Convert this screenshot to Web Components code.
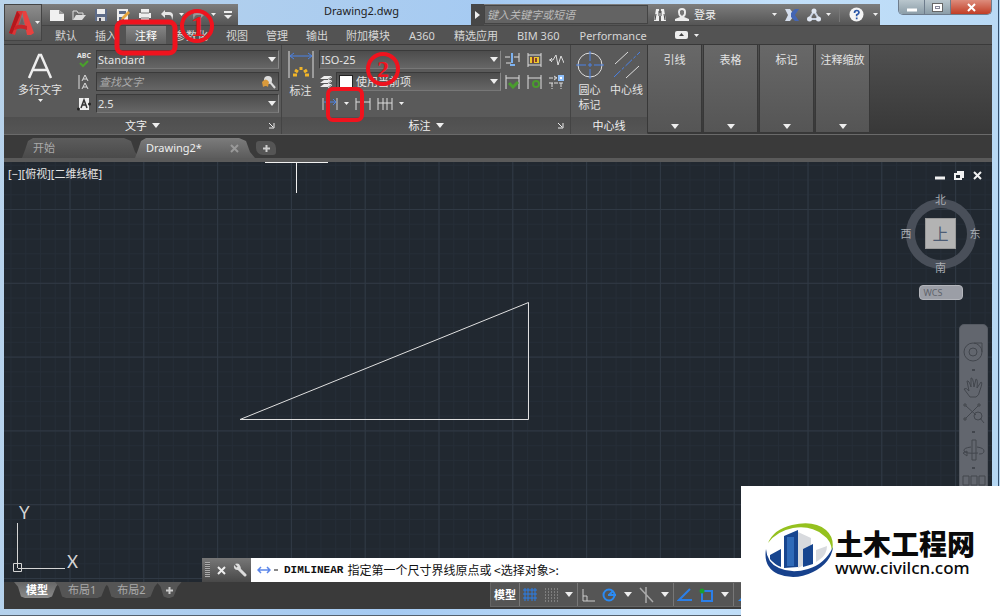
<!DOCTYPE html>
<html lang="zh-CN">
<head>
<meta charset="utf-8">
<meta name="viewport" content="width=device-width, initial-scale=1">
<title>Drawing2.dwg</title>
<style>
  body {
    margin: 0;
    font-family: "Noto Sans", "Noto Sans CJK SC", sans-serif;
    font-size: 11px;
    line-height: 16px;
    color: #e4e4e4;
  }
</style>
</head>
<body>
<cad-app></cad-app>

<script>
// shared by every element that holds controls
const RESET = `
  * { box-sizing: border-box; }
  button, input, select { font: inherit; color: inherit; background: none; border: 0; padding: 0; margin: 0; }
  a { color: inherit; text-decoration: none; }
`;

class CadElement extends HTMLElement {
  constructor() {
    super();
    this.attachShadow({ mode: 'open' });
    this.shadowRoot.innerHTML = `<style>${RESET}</style>` + this.render();
  }
}

// [width, height, markup]
const ICONS = {
  logo: [26, 27, '<path d="M14 2h4l8 22-3 2h-4z" fill="#e8413f"/><path d="M9 2h6l-8 24-6-2z" fill="#dc3436"/><path d="m9 2-8 22 3 1 8-19z" fill="#b5171d"/><path d="M7 17q6-3 12 0v4q-6-3-13 0z" fill="#c92428"/><path d="m12 15 2-7 2 7z" fill="#6d6163"/>'],
  fresh: [14, 14, '<path d="M0 2h9l5 4v7H0z" fill="#f0f0f0"/><path d="M9 2v4h5z" fill="#999"/>'],
  open: [14, 14, '<path d="M1 12V3h4l1 2h5v2" fill="none" stroke="#ddd"/><path d="M1 12 4 7h10l-4 5z" fill="#ddd"/>'],
  save: [14, 14, '<path d="M1 1h12v12H1z" fill="#5d6b87"/><path d="M3 1h8v5H3z" fill="#eee"/><path d="M3 9h8v4H3z" fill="#ddd"/><path d="M5 10h2v3H5z" fill="#445"/>'],
  saveas: [14, 14, '<path d="M1 1h11v12H1z" fill="#eee"/><path d="M3 3h7v3H3zM3 9h5v4H3z" fill="#5d6b87"/><path d="m6 9 6-6 2 2-6 6-3 1z" fill="#e8a53c"/>'],
  print: [14, 14, '<path d="M3 1h8v4H3zM1 5h12v5H1zM3 9h8v4H3z" fill="#eee"/><path d="M3 5h8M3 10h8" stroke="#777"/>'],
  undo: [14, 14, '<path d="M5 2 1 6l4 4V7h4q3 0 3 5 3-8-3-8H5z" fill="#e6e6e6"/>'],
  redo: [14, 14, '<path d="m9 2 4 4-4 4V7H5q-3 0-3 5-3-8 3-8h4z" fill="#999"/>'],
  more: [8, 8, '<path d="M0 0h8v2H0zM0 4h8L4 8z" fill="#eee"/>'],
  down: [8, 5, '<path d="M0 0h8L4 5z" fill="#eee"/>'],
  tiny: [5, 3, '<path d="M0 0h5L2.5 3z" fill="#eee"/>'],
  play: [6, 8, '<path d="M0 0v8l5-4z" fill="#eee"/>'],
  binoculars: [14, 14, '<path d="M3 1h3v4h2V1h3l2 12H8V8H6v5H1z" fill="#f0f0f0"/><path d="M3 6 2 12M11 6l1 6M6 3v5M8 3v5" stroke="#444"/>'],
  user: [14, 14, '<path d="M3 4q0-4 4-4t4 4-2 5l5 2v2H0v-2l5-2Q3 7 3 4z" fill="#ececec"/><path d="M5 3q2-2 4 0v3L7 8 5 6z" fill="#777"/>'],
  exchange: [14, 14, '<path d="M0 1h5l3 4v4l-3 4H0l3-6z" fill="#d5deed"/><path d="M14 1h-4L6 5v4l4 4h4l-4-6z" fill="#4466b4"/>'],
  a360: [14, 14, '<path d="M7 3 2 11h10z" fill="none" stroke="#c9d3e3" stroke-width="2"/><circle cx="7" cy="3" r="2.5" fill="#dfe6f1"/><circle cx="2.5" cy="11" r="2.5" fill="#dfe6f1"/><circle cx="11.5" cy="11" r="2.5" fill="#dfe6f1"/>'],
  help: [15, 15, '<circle cx="7.5" cy="7.5" r="7" fill="#f4f4f4"/><path d="M5.5 6q0-2.5 2.2-2.5T10 5.6q0 1.300-2.300 2.200v1.400M7.700 10.500v1.800" fill="none" stroke="#2a57a8" stroke-width="1.700"/>'],
  textBig: [26, 26, '<path d="m2 25 10-23h2l10 23m-18-8h14" fill="none" stroke="#eee" stroke-width="2.500"/>'],
  spell: [12, 8, '<path d="m2 3 3 3 5-5" fill="none" stroke="#4aa02c" stroke-width="2"/>'],
  findText: [14, 16, '<path d="M2 1v14M5 7l3-6 3 6M6 5h4M5 15l3-6 3 6M6 13h4" fill="none" stroke="#ddd"/>'],
  height: [14, 14, '<path d="M2 1h10v12H2z" fill="#eee"/><path d="m4 11 3-8 3 8M5 8h4" fill="none" stroke="#333" stroke-width="1.500"/><circle cx="1.500" cy="12" r="1.500" fill="#222"/><circle cx="12.500" cy="7" r="1.500" fill="#222"/>'],
  search: [14, 14, '<circle cx="6" cy="5" r="4" fill="#ddd"/><path d="m8 7 5 6" stroke="#ddd" stroke-width="2"/><path d="M0 7q4-5 7 0l-1 5q-2-2-5 0z" fill="#d99a3c"/>'],
  dimBig: [26, 28, '<path d="M1 0v27M25 0v27" stroke="#ddd"/><path d="M3 5h20M6 2 2 5l4 3M20 2l4 3-4 3" fill="none" stroke="#4a82e6"/><path d="M5 24h4M7 19l3 2M13 16v3M19 19l-3 2M21 24h-4" stroke="#f0b429" stroke-width="3"/>'],
  layers: [14, 14, '<path d="M5 1h8L9 4H1zM5 5h8L9 8H1zM5 9h8l-4 3H1z" fill="#eee"/><path d="M9 5l4-3M9 9l4-3M9 13l4-3" stroke="#ddd"/>'],
  linear: [16, 14, '<path d="M1 1v12M15 1v12" stroke="#ccc"/><path d="M2 5h12M11 2l3 3-3 3" fill="none" stroke="#4a82e6"/>'],
  quick: [16, 14, '<path d="M1 1v12M15 1v12M1 5h14" stroke="#ddd" fill="none"/>'],
  chain: [16, 14, '<path d="M1 1v12M6 1v12M10 1v12M15 1v12M1 6h14" stroke="#ddd"/>'],
  dimBreak: [15, 14, '<path d="M7 0v10M5 12h5" stroke="#7db2f0" stroke-width="2"/><path d="M0 4h5M9 4h5M14 0v9M1 10h5" stroke="#ddd"/>'],
  dimSpace: [15, 14, '<path d="M1 0v14M14 0v14M1 2h13M1 12h13" stroke="#ddd"/><path d="M3 4h9v6H3z" fill="#eec62d"/><path d="M6 4v6M9 5v4" stroke="#83402f" stroke-width="2"/>'],
  jog: [15, 14, '<path d="M0 7h4l3-5 2 10 3-9 3 7M3 5 1 7l2 2" fill="none" stroke="#ddd"/>'],
  inspect: [15, 14, '<path d="M1 0v14M14 0v14M1 3h13" stroke="#ddd"/><path d="m4 8 4 4 5-5" fill="none" stroke="#4a9b2e" stroke-width="3"/>'],
  update: [15, 14, '<path d="M1 0v14M14 0v14M1 3h13" stroke="#ddd"/><circle cx="9" cy="9" r="3" fill="none" stroke="#4a9b2e" stroke-width="2"/>'],
  reassoc: [15, 14, '<path d="M0 3h8M5 1l3 2-3 2M0 8h14M3 8v6M12 8v6" fill="none" stroke="#ddd" stroke-dasharray="4 1"/><path d="M9 0h6v6H9z" fill="#8fc0fb"/><path d="M11 2h2v2h-2z" fill="#fff"/>'],
  centerMark: [28, 28, '<circle cx="14" cy="14" r="12" fill="none" stroke="#ddd"/><path d="M0 14h10m2 0h4m2 0h10M14 0v10m0 2v4m0 2v10" stroke="#4a82e6"/>'],
  centerLine: [28, 28, '<path d="M2 13 15 1M13 27l13-12" stroke="#ddd"/><path d="m1 26 26-25" stroke="#4a82e6" stroke-dasharray="9 2 3 2"/>'],
  launcher: [6, 6, '<path d="m0 0 4 4M5 0v5H0" fill="none" stroke="#eee"/>'],
  toggle: [13, 9, '<rect width="13" height="8" rx="2" fill="#eee"/><path d="M4 5h5L6.500 2z" fill="#444"/>'],
  plus: [9, 9, '<path d="M4.500 1v7M1 4.500h7" stroke="#ccc" stroke-width="2"/>'],
  close: [9, 9, '<path d="m1 1 7 7m0-7L1 8" stroke="currentColor" stroke-width="2"/>'],
  minimise: [10, 9, '<path d="M0 7h10" stroke="currentColor" stroke-width="3"/>'],
  restore: [10, 9, '<path d="M1 3h6v5H1zM3 1h6v6" fill="none" stroke="currentColor" stroke-width="2"/>'],
  window: [11, 9, '<path d="M0 0h11v9H0z" fill="#666"/><path d="M1 1h9v7H1z" fill="#fff"/><path d="M3 3h5v3H3z" fill="#889"/><path d="M4 4h3v1H4z" fill="#fff"/>'],
  wrench: [14, 14, '<path d="m5 5 7 7" stroke="#ddd" stroke-width="3" stroke-linecap="round"/><path d="M2 1 5 4 4 5 1 2Q0 7 5 7T6 1Q4 0 2 1z" fill="#ddd"/>'],
  command: [14, 9, '<path d="M2 4h10M4 1 1 4l3 3M10 1l3 3-3 3" fill="none" stroke="#5b86ea" stroke-width="1.500"/>'],
  gridBlue: [14, 14, '<path d="M2 0v13M5 0v13M9 0v13M12 0v13M0 2h14M0 6h14M0 10h14" stroke="#2b7fe8"/>'],
  gridDots: [14, 14, '<path d="M1 1h13M1 4h13M1 7h13M1 10h13M1 13h13" stroke="#aaa" stroke-dasharray="1 2"/>'],
  ortho: [14, 14, '<path d="M2 1v12h12M2 8h4v5" fill="none" stroke="#ccc"/>'],
  polar: [15, 14, '<circle cx="7" cy="7" r="5.500" fill="none" stroke="#2b8af2" stroke-width="2"/><path d="M6 7h8M7 7l4-4" stroke="#2b8af2" stroke-width="2"/>'],
  iso: [15, 16, '<path d="M7 0v16M1 1l13 14" stroke="#aaa" stroke-width="1.500"/>'],
  track: [15, 14, '<path d="M13 1 2 12h13" fill="none" stroke="#2b7fe8" stroke-width="2"/>'],
  snap: [15, 14, '<path d="M3 3h10v10H3z" fill="none" stroke="#2b7fe8" stroke-width="2"/><circle cx="3" cy="3" r="2.500" fill="#1c9e2d"/>'],
  annot: [14, 14, '<path d="M13 1 1 13h12z" fill="#2b8af2"/>'],
  wheel: [24, 24, '<circle cx="11" cy="12" r="9"/><path d="M12 3h8v9"/><circle cx="11" cy="12" r="4"/>'],
  hand: [24, 24, '<path d="M8 21 2 13q2-2 5 2L5 5q2-1 4 6V2q2-1 3 9l2-8q2 0 1 9l4-6q2 0-1 8-1 6-4 7z"/>'],
  zoom: [24, 24, '<path d="m4 4 10 9M16 4 4 16m14 0 4 5"/><circle cx="16" cy="14" r="4"/><path d="M2 2h2v2H2zM16 2h2v2h-2zM2 16h2v2H2z"/>'],
  orbit: [24, 24, '<path d="M10 2h4v20h-4zM9 9Q1 10 2 13t14 2M15 9q7 1 7 4t-5 3"/><path d="m1 15 4 3v-5z"/>'],
  motion: [24, 12, '<path d="M1 2h6v9H1zM9 2h6v9H9zM17 2h6v9h-6z"/>']
};

class CadIcon extends HTMLElement {
  constructor() {
    super();
    this.attachShadow({ mode: 'open' });
  }

  connectedCallback() {
    const [w, h, body] = ICONS[this.getAttribute('name')];
    this.shadowRoot.innerHTML = `
      <style>
        :host { display: inline-flex; flex: none; }
        svg { display: block; }
      </style>
      <svg width="${w}" height="${h}" viewBox="0 0 ${w} ${h}" aria-hidden="true">${body}</svg>
    `;
  }
}
customElements.define('cad-icon', CadIcon);

class CadTitleBar extends CadElement {
  render() {
    return `
      <style>
        :host { display: flex; height: 25px; color: #eee; }
        .quick, .info { display: flex; align-items: center; margin-top: 4px; background: linear-gradient(#7d7d7d, #555); }
        .quick { gap: 8px; width: 196px; padding-left: 8px; }
        .quick button, .info button { display: flex; align-items: center; }
        .small { gap: 5px; }
        h1 { flex: 1; margin: 0; padding: 3px 0 0 14px; font-size: 11px; font-weight: 400; text-align: center; color: #222; }
        .info { width: 409px; gap: 8px; padding-right: 2px; }
        .expand { width: 13px; height: 21px; justify-content: center; background: #474747; }
        .find { display: flex; align-items: center; gap: 5px; margin-left: -8px; }
        input { width: 164px; height: 19px; padding: 0 2px; background: #636363; border: 1px solid #444; font-style: italic; }
        input::placeholder { color: #bbb; opacity: 1; }
        .login { gap: 5px; }
        .grow { flex: 1; justify-content: flex-end; }
        .help { gap: 9px; border-left: 1px solid #777; padding-left: 9px; }
        .win { display: flex; height: 15px; margin-left: 18px; border: 1px solid #6e7c8c; border-top: 0; border-radius: 0 0 5px 5px; overflow: hidden; color: #fff; }
        .win button { display: flex; align-items: center; justify-content: center; width: 26px; background: linear-gradient(#b9c6cd, #8b9da8); border-right: 1px solid #6e7c8c; }
        .win .close { width: 40px; border: 0; background: linear-gradient(#dd8c7c, #c13d25); }
      </style>
      <div class="quick">
        <button aria-label="新建"><cad-icon name="fresh"></cad-icon></button>
        <button aria-label="打开"><cad-icon name="open"></cad-icon></button>
        <button aria-label="保存"><cad-icon name="save"></cad-icon></button>
        <button aria-label="另存为"><cad-icon name="saveas"></cad-icon></button>
        <button aria-label="打印"><cad-icon name="print"></cad-icon></button>
        <button aria-label="放弃" class="small"><cad-icon name="undo"></cad-icon><cad-icon name="tiny"></cad-icon></button>
        <button aria-label="重做" class="small"><cad-icon name="redo"></cad-icon><cad-icon name="tiny"></cad-icon></button>
        <button aria-label="自定义"><cad-icon name="more"></cad-icon></button>
      </div>
      <h1>Drawing2.dwg</h1>
      <div class="info">
        <button class="expand" aria-label="展开搜索"><cad-icon name="play"></cad-icon></button>
        <div class="find">
          <input type="search" aria-label="搜索" placeholder="键入关键字或短语">
          <button aria-label="查找"><cad-icon name="binoculars"></cad-icon></button>
        </div>
        <button class="login"><cad-icon name="user"></cad-icon>登录</button>
        <button class="grow" aria-label="帐户"><cad-icon name="tiny"></cad-icon></button>
        <button aria-label="Exchange"><cad-icon name="exchange"></cad-icon></button>
        <button aria-label="A360" class="small"><cad-icon name="a360"></cad-icon><cad-icon name="tiny"></cad-icon></button>
        <button aria-label="帮助" class="help"><cad-icon name="help"></cad-icon><cad-icon name="tiny"></cad-icon></button>
      </div>
      <div class="win">
        <button aria-label="最小化"><cad-icon name="minimise"></cad-icon></button>
        <button aria-label="还原"><cad-icon name="window"></cad-icon></button>
        <button aria-label="关闭" class="close"><cad-icon name="close"></cad-icon></button>
      </div>
    `;
  }
}
customElements.define('cad-title-bar', CadTitleBar);

class CadMenu extends CadElement {
  render() {
    return `
      <style>
        :host { display: flex; height: 20px; padding-left: 42px; background: #535353; border-top: 1px solid #444; border-bottom: 1px solid #3a3a3a; color: #d6d6d6; }
        nav { display: flex; }
        a { padding: 2px 9px 0; white-space: nowrap; }
        a:lang(en) { padding: 2px 10px 0; }
        a[aria-current] { color: #fff; background: linear-gradient(#858585, #606060); }
        button { display: flex; align-items: center; gap: 6px; margin-left: 18px; }
      </style>
      <nav>
        <a href="#">默认</a><a href="#">插入</a><a href="#" aria-current="page">注释</a><a href="#">参数化</a>
        <a href="#">视图</a><a href="#">管理</a><a href="#">输出</a><a href="#">附加模块</a><a href="#" lang="en">A360</a>
        <a href="#">精选应用</a><a href="#" lang="en">BIM 360</a><a href="#" lang="en">Performance</a>
      </nav>
      <button aria-label="最小化功能区"><cad-icon name="toggle"></cad-icon><cad-icon name="tiny"></cad-icon></button>
    `;
  }
}
customElements.define('cad-menu', CadMenu);

// drop-down list; the slot before the select takes a swatch
class CadCombo extends CadElement {
  render() {
    return `
      <style>
        :host { display: flex; align-items: center; height: 19px; background: linear-gradient(#4c4c4c, #666); border: 1px solid #3a3a3a; border-right-color: #888; border-bottom-color: #777; box-sizing: border-box; font-size: 11px; }
        .box { display: grid; flex: 1; align-items: center; }
        select { grid-area: 1 / 1; width: 100%; height: 17px; padding-left: 1px; appearance: none; }
        cad-icon { grid-area: 1 / 1; justify-self: end; margin-right: 2px; pointer-events: none; }
      </style>
      <slot></slot>
      <div class="box"><select><option></option></select><cad-icon name="down"></cad-icon></div>
    `;
  }

  connectedCallback() {
    const select = this.shadowRoot.querySelector('select');
    select.setAttribute('aria-label', this.getAttribute('label'));
    select.options[0].textContent = this.getAttribute('value');
  }
}
customElements.define('cad-combo', CadCombo);

class CadPanel extends CadElement {
  render() {
    return `
      <style>
        :host { display: flex; flex-direction: column; box-sizing: border-box; background: #5a5a5a; border-right: 1px solid #444; }
        .body { display: flex; flex: 1; padding-top: 5px; }
        footer { display: grid; grid-template-columns: 18px 1fr 18px; align-items: center; justify-items: center; height: 17px; background: linear-gradient(#4f4f4f, #555); color: #f0f0f0; }
        footer button { display: flex; align-items: center; gap: 5px; }
        .title { grid-column: 2; }
        :host([plain]) .arrow { display: none; }
      </style>
      <div class="body"><slot></slot></div>
      <footer>
        <button class="title"><slot name="title"></slot><cad-icon class="arrow" name="down"></cad-icon></button>
        <button class="arrow" aria-label="对话框"><cad-icon name="launcher"></cad-icon></button>
      </footer>
    `;
  }
}
customElements.define('cad-panel', CadPanel);

class CadFoldedPanel extends CadElement {
  render() {
    return `
      <style>
        :host { display: flex; width: 53px; height: 87px; background: linear-gradient(#686868, #555); outline: 1px solid #383838; }
        button { display: flex; flex: 1; flex-direction: column; align-items: center; justify-content: space-between; padding: 7px 0 3px; white-space: nowrap; }
      </style>
      <button><span><slot></slot></span><cad-icon name="down"></cad-icon></button>
    `;
  }
}
customElements.define('cad-folded-panel', CadFoldedPanel);

class CadRibbon extends CadElement {
  render() {
    return `
      <style>
        :host { display: flex; height: 90px; background: linear-gradient(#505050, #383838); border-bottom: 1px solid #6a6a6a; box-sizing: border-box; }
        .text { width: 278px; }
        .dims { width: 289px; }
        .center { width: 77px; }
        .big { display: flex; flex-direction: column; align-items: center; align-self: flex-start; }
        .multi { width: 72px; padding-top: 3px; gap: 4px; line-height: 14px; }
        .multi .drop { margin-top: -2px; }
        .fields { display: grid; flex: 1; grid-template-columns: 16px 1fr; grid-auto-rows: 19px; gap: 3px 4px; align-items: center; justify-items: center; padding-right: 2px; }
        .fields cad-combo, .find { width: 100%; }
        .fields button { display: flex; }
        .fields .spell { flex-direction: column; align-items: center; font-size: 7px; line-height: 8px; font-weight: 700; }
        .find { display: flex; align-items: center; height: 19px; padding-right: 2px; background: linear-gradient(#4c4c4c, #666); border: 1px solid #3a3a3a; }
        .find input { flex: 1; min-width: 0; padding-left: 2px; font-style: italic; }
        .find input::placeholder { color: #aaa; opacity: 1; }
        .dim { width: 37px; padding-top: 1px; gap: 4px; }
        .styles { display: flex; flex-direction: column; gap: 3px; width: 182px; }
        .row { display: flex; align-items: center; gap: 3px; height: 19px; }
        .row cad-combo { flex: 1; }
        .swatch { width: 14px; height: 14px; margin: 0 2px; background: #fff; border: 1px solid #222; }
        .tools { gap: 6px; padding-left: 3px; }
        .tools button { display: flex; align-items: center; gap: 6px; }
        .grid { display: grid; grid-template-columns: repeat(3, 15px); grid-auto-rows: 19px; gap: 3px 7px; align-items: center; align-content: start; padding-left: 4px; }
        .grid button { display: flex; }
        .mark { width: 37px; padding-top: 1px; gap: 3px; line-height: 15px; }
        .folded { display: flex; gap: 3px; }
      </style>
      <cad-panel class="text">
        <span slot="title">文字</span>
        <button class="big multi"><cad-icon name="textBig"></cad-icon><span>多行文字</span><cad-icon class="drop" name="tiny"></cad-icon></button>
        <div class="fields">
          <button class="spell" aria-label="拼写检查"><span>ABC</span><cad-icon name="spell"></cad-icon></button>
          <cad-combo label="文字样式" value="Standard"></cad-combo>
          <cad-icon name="findText"></cad-icon>
          <div class="find"><input type="text" aria-label="查找文字" placeholder="查找文字"><button aria-label="查找"><cad-icon name="search"></cad-icon></button></div>
          <cad-icon name="height"></cad-icon>
          <cad-combo label="文字高度" value="2.5"></cad-combo>
        </div>
      </cad-panel>
      <cad-panel class="dims">
        <span slot="title">标注</span>
        <button class="big dim"><cad-icon name="dimBig"></cad-icon><span>标注</span></button>
        <div class="styles">
          <div class="row"><cad-combo label="标注样式" value="ISO-25"></cad-combo></div>
          <div class="row"><cad-icon name="layers"></cad-icon><cad-combo label="图层" value="使用当前项"><span class="swatch"></span></cad-combo></div>
          <div class="row tools">
            <button aria-label="线性"><cad-icon name="linear"></cad-icon><cad-icon name="tiny"></cad-icon></button>
            <button aria-label="快速"><cad-icon name="quick"></cad-icon></button>
            <button aria-label="连续"><cad-icon name="chain"></cad-icon><cad-icon name="tiny"></cad-icon></button>
          </div>
        </div>
        <div class="grid">
          <button aria-label="打断"><cad-icon name="dimBreak"></cad-icon></button>
          <button aria-label="调整间距"><cad-icon name="dimSpace"></cad-icon></button>
          <button aria-label="折弯"><cad-icon name="jog"></cad-icon></button>
          <button aria-label="检验"><cad-icon name="inspect"></cad-icon></button>
          <button aria-label="更新"><cad-icon name="update"></cad-icon></button>
          <button aria-label="重新关联"><cad-icon name="reassoc"></cad-icon></button>
        </div>
      </cad-panel>
      <cad-panel class="center" plain>
        <span slot="title">中心线</span>
        <button class="big mark"><cad-icon name="centerMark"></cad-icon><span>圆心<br>标记</span></button>
        <button class="big mark"><cad-icon name="centerLine"></cad-icon><span>中心线</span></button>
      </cad-panel>
      <div class="folded">
        <cad-folded-panel>引线</cad-folded-panel>
        <cad-folded-panel>表格</cad-folded-panel>
        <cad-folded-panel>标记</cad-folded-panel>
        <cad-folded-panel>注释缩放</cad-folded-panel>
      </div>
    `;
  }
}
customElements.define('cad-ribbon', CadRibbon);

class CadFileTabs extends CadElement {
  render() {
    return `
      <style>
        :host { display: flex; height: 27px; padding: 3px 0 0 18px; background: #3a3a3a; border-bottom: 4px solid #5a5a5a; box-sizing: border-box; }
        .tab { display: flex; align-items: center; justify-content: space-between; width: 118px; height: 20px; padding: 0 16px 0 11px; background: linear-gradient(#5c5c5c, #4a4a4a); color: #aaa;
          clip-path: polygon(0 100%, 3px 60%, 6px 15%, 11px 0, calc(100% - 16px) 0, calc(100% - 9px) 15%, calc(100% - 5px) 70%, 100% 100%); }
        .tab + .tab { width: 120px; margin-left: -5px; background: linear-gradient(#7c7c7c, #5c5c5c); color: #eee; }
        .tab button { display: flex; color: #999; }
        .add { display: flex; align-items: center; justify-content: center; width: 20px; height: 14px; margin: 3px 0 0 1px; background: #555; border-radius: 3px 7px 3px 7px; }
      </style>
      <div class="tab"><a href="#">开始</a></div>
      <div class="tab"><a href="#">Drawing2*</a><button aria-label="关闭图形"><cad-icon name="close"></cad-icon></button></div>
      <button class="add" aria-label="新图形"><cad-icon name="plus"></cad-icon></button>
    `;
  }
}
customElements.define('cad-file-tabs', CadFileTabs);

class CadViewCube extends CadElement {
  render() {
    return `
      <style>
        :host { display: grid; grid-template-columns: 18px 10px 31px 10px 18px; grid-template-rows: 17px 10px 31px 10px 17px 24px; place-items: center; color: #a9adb3; }
        .ring { grid-area: 1 / 1 / 6 / 6; width: 70px; height: 70px; border: 9px solid #494f59; border-radius: 50%; }
        .n { grid-area: 1 / 3; } .w { grid-area: 3 / 1; } .e { grid-area: 3 / 5; } .s { grid-area: 5 / 3; }
        .top { grid-area: 3 / 3; width: 31px; height: 31px; background: #b3b3b3; color: #4d5c74; font-size: 16px; border: 1px solid #999; }
        .wcs { grid-area: 6 / 1 / 7 / 6; align-self: end; width: 44px; height: 15px; padding: 0 4px; text-align: left; font-size: 9px; line-height: 12px; color: #5f636b; background: #9b9ea6; border: 1px solid #b3b5bb; border-radius: 4px; }
      </style>
      <div class="ring"></div>
      <span class="n">北</span><span class="w">西</span>
      <button class="top">上</button>
      <span class="e">东</span><span class="s">南</span>
      <button class="wcs">WCS</button>
    `;
  }
}
customElements.define('cad-view-cube', CadViewCube);

class CadNavBar extends CadElement {
  render() {
    return `
      <style>
        :host { display: flex; flex-direction: column; align-items: center; gap: 5px; width: 29px; padding: 15px 0 4px; box-sizing: border-box; background: #62666e; border: 1px solid #555a62; border-radius: 5px; }
        button { display: flex; }
        .pair { display: flex; flex-direction: column; gap: 2px; }
        cad-icon { fill: none; stroke: #42464d; stroke-width: 1px; }
        i { width: 3px; height: 2px; background: #42464d; }
      </style>
      <button aria-label="导航控制盘"><cad-icon name="wheel"></cad-icon></button>
      <i></i>
      <div class="pair">
        <button aria-label="平移"><cad-icon name="hand"></cad-icon></button>
        <button aria-label="缩放"><cad-icon name="zoom"></cad-icon></button>
      </div>
      <i></i>
      <button aria-label="动态观察"><cad-icon name="orbit"></cad-icon></button>
      <i></i>
      <button aria-label="ShowMotion"><cad-icon name="motion"></cad-icon></button>
    `;
  }
}
customElements.define('cad-nav-bar', CadNavBar);

class CadCommandLine extends CadElement {
  render() {
    return `
      <style>
        :host { display: flex; height: 24px; background: #fff; color: #111; }
        .grip { display: flex; align-items: center; gap: 7px; width: 49px; padding-left: 3px; background: linear-gradient(#777, #484848); color: #eee; }
        .grip i { width: 5px; height: 16px; background: repeating-linear-gradient(#aaa 0 1px, #555 1px 2px); }
        .grip button { display: flex; }
        label { display: flex; align-items: center; gap: 4px; padding-left: 6px; font-size: 12px; white-space: pre; font-family: "Noto Sans CJK SC", sans-serif; }
        .recent { display: flex; align-items: center; gap: 3px; margin-right: 2px; }
        .recent i { width: 4px; height: 2px; background: #888; }
        b { font-family: "Liberation Mono", monospace; font-size: 11px; }
        input { flex: 1; min-width: 0; }
      </style>
      <div class="grip">
        <i></i>
        <button aria-label="关闭"><cad-icon name="close"></cad-icon></button>
        <button aria-label="自定义"><cad-icon name="wrench"></cad-icon></button>
      </div>
      <label for="cmd"><span class="recent"><cad-icon name="command"></cad-icon><i></i></span><b>DIMLINEAR</b><span>指定第一个尺寸界线原点或 &lt;选择对象&gt;:</span></label>
      <input id="cmd" type="text">
    `;
  }
}
customElements.define('cad-command-line', CadCommandLine);

class CadCanvas extends CadElement {
  render() {
    return `
      <style>
        :host { display: block; position: relative; overflow: hidden; background: #212830; }
        .drawing { position: absolute; inset: 0; width: 100%; height: 100%; }
        .ucs { position: absolute; left: 8px; bottom: 4px; }
        .label { position: absolute; left: 4px; top: 4px; }
        .controls { position: absolute; right: 10px; top: 9px; display: flex; gap: 9px; color: #f2f2f2; }
        .controls button { display: flex; }
        cad-view-cube { position: absolute; right: 8px; top: 29px; }
        cad-nav-bar { position: absolute; right: 4px; top: 162px; }
        cad-command-line { position: absolute; left: 198px; right: 0; bottom: 0; }
      </style>
      <svg class="drawing" aria-hidden="true">
        <defs>
          <pattern id="minor" x="65.500" y="47" width="14.760" height="14.760" patternUnits="userSpaceOnUse"><path d="M0 .5h15M.5 0v15" stroke="#252d37"/></pattern>
          <pattern id="major" x="65.500" y="47" width="73.800" height="73.800" patternUnits="userSpaceOnUse"><path d="M0 .5h74M.5 0v74" stroke="#303944"/></pattern>
        </defs>
        <rect width="100%" height="100%" fill="url(#minor)"/>
        <rect width="100%" height="100%" fill="url(#major)"/>
        <path d="M261 .5h63M292.500 0v31" stroke="#f0f0f0" fill="none"/>
        <path d="m236 257.500 288.500-117v117z" stroke="#e0e0e0" fill="none"/>
      </svg>
      <svg class="ucs" width="70" height="82" aria-label="UCS">
        <path d="M1.500 67.500h8v8h-8zM5.500 27v45M6 72.500h47" fill="none" stroke="#d5d5d5"/>
        <g fill="#d5d5d5" font-family="Lato, sans-serif" font-size="17"><text x="7" y="23">Y</text><text x="55" y="72">X</text></g>
      </svg>
      <span class="label">[−][俯视][二维线框]</span>
      <div class="controls">
        <button aria-label="最小化"><cad-icon name="minimise"></cad-icon></button>
        <button aria-label="还原"><cad-icon name="restore"></cad-icon></button>
        <button aria-label="关闭"><cad-icon name="close"></cad-icon></button>
      </div>
      <cad-view-cube></cad-view-cube>
      <cad-nav-bar></cad-nav-bar>
      <cad-command-line></cad-command-line>
    `;
  }
}
customElements.define('cad-canvas', CadCanvas);

class CadStatusBar extends CadElement {
  render() {
    return `
      <style>
        :host { display: flex; justify-content: space-between; height: 27px; background: #3a3a3a; }
        nav { display: flex; padding-left: 10px; }
        nav a, nav button { height: 16px; padding: 0 13px; margin-right: -5px; line-height: 16px; background: #555; color: #aaa;
          clip-path: polygon(0 0, 100% 0, calc(100% - 4px) 30%, calc(100% - 8px) 90%, calc(100% - 12px) 100%, 11px 100%, 7px 90%, 4px 30%); }
        nav a[aria-current] { background: linear-gradient(#666, #8a8a8a); color: #fff; font-weight: 700; padding: 0 12px; }
        nav button { display: flex; align-items: center; padding: 0 8px; margin-left: 3px; }
        .tools { display: flex; align-items: stretch; height: 25px; width: 502px; background: #555; border: 1px solid #666; }
        .tools div { display: flex; align-items: center; gap: 7px; padding: 0 4px 0 3px; border-right: 1px solid #777; }
        .tools button { display: flex; align-items: center; gap: 7px; }
        .tools .model { padding: 0 3px; color: #fff; font-weight: 700; border-right: 1px solid #777; }
      </style>
      <nav><a href="#" aria-current="page">模型</a><a href="#">布局1</a><a href="#">布局2</a><button aria-label="新建布局"><cad-icon name="plus"></cad-icon></button></nav>
      <div class="tools">
        <button class="model">模型</button>
        <div>
          <button aria-label="栅格"><cad-icon name="gridBlue"></cad-icon></button>
          <button aria-label="捕捉"><cad-icon name="gridDots"></cad-icon><cad-icon name="down"></cad-icon></button>
        </div>
        <div>
          <button aria-label="正交"><cad-icon name="ortho"></cad-icon></button>
          <button aria-label="极轴追踪"><cad-icon name="polar"></cad-icon><cad-icon name="down"></cad-icon></button>
          <button aria-label="等轴测"><cad-icon name="iso"></cad-icon><cad-icon name="down"></cad-icon></button>
        </div>
        <div>
          <button aria-label="对象捕捉追踪"><cad-icon name="track"></cad-icon></button>
          <button aria-label="对象捕捉"><cad-icon name="snap"></cad-icon><cad-icon name="down"></cad-icon></button>
        </div>
        <div><button aria-label="注释比例"><cad-icon name="annot"></cad-icon></button></div>
      </div>
    `;
  }
}
customElements.define('cad-status-bar', CadStatusBar);

class SiteBadge extends CadElement {
  render() {
    return `
      <style>
        :host { display: block; padding: 37px 25px 38px 24px; background: #fff; color: #0a0a0a; white-space: nowrap; }
        a { display: flex; align-items: flex-start; }
        p { margin: 0; }
        .name { font: 900 28px/28px "Noto Sans CJK SC", sans-serif; padding-top: 6px; }
        .url { font: 500 17px/21px "Noto Sans", sans-serif; }
      </style>
      <a href="#">
        <svg width="70" height="55" viewBox="0 0 70 55" aria-hidden="true">
          <path d="m33 9 13 6v9l-7 4v14l-6 3zM51 27l11-4q0 9-8 14l-3 2z" fill="#d8dade"/>
          <path d="m19 13 14-6v37l-14 1zM5 32l11-6v18q-7-3-11-8zM38 26l10-5v20l-10 3z" fill="#17458f"/>
          <path d="M22 14h7v29h-7z" fill="#2f6ab8"/>
          <path d="M3 20Q9 6 27 2q22-5 34 5 9 8 6 21-1-11-9-16Q46 2 28 5 12 8 3 20z" fill="#95c11f"/>
          <path d="M1 26q-3 18 12 25 17 7 35-2 18-9 20-25-8 17-25 22-16 5-29-1Q2 40 1 26z" fill="#17418c"/>
        </svg>
        <div>
          <p class="name">土木工程网</p>
          <p class="url">www.civilcn.com</p>
        </div>
      </a>
    `;
  }
}
customElements.define('site-badge', SiteBadge);

// numbered red pen marks laid over the ribbon
class StepMarks extends CadElement {
  render() {
    return `
      <style>
        :host { display: block; pointer-events: none; }
        svg { display: block; }
      </style>
      <svg width="420" height="130">
        <g fill="none" stroke="#f0131e" stroke-width="4">
          <rect x="117" y="22" width="58" height="31" rx="6" stroke-width="5"/>
          <circle cx="197" cy="26" r="15"/>
          <rect x="328" y="89" width="34" height="31" rx="5"/>
          <circle cx="383" cy="69" r="15"/>
        </g>
        <g fill="#f0131e" font-family="Liberation Serif, serif" font-weight="700" text-anchor="middle">
          <text x="198" y="36" font-size="30">1</text><text x="383" y="77" font-size="24">2</text>
        </g>
      </svg>
    `;
  }
}
customElements.define('step-marks', StepMarks);

class CadApp extends CadElement {
  render() {
    return `
      <style>
        :host { display: flex; flex-direction: column; position: relative; height: 100vh; padding: 0 8px 7px 4px; overflow: hidden; box-sizing: border-box;
          background: linear-gradient(90deg, transparent calc(100% - 2px), #35506d calc(100% - 2px) calc(100% - 1px), #b4d6f2 0), linear-gradient(transparent calc(100% - 1px), #53606d 0), linear-gradient(100deg, #b9d3ea, #a5caf2 45%, #c3e0fa 70%, #b4d6f2); }
        header { display: grid; grid-template-columns: 38px 1fr; grid-template-rows: 25px 20px; }
        .app { grid-area: 1 / 1 / 3 / 2; z-index: 1; display: flex; align-items: center; gap: 1px; width: 38px; height: 37px; margin-top: 4px; padding-left: 3px; background: linear-gradient(#8d8d8d, #5a5a5a); border: 1px solid #444; }
        cad-title-bar { grid-area: 1 / 2; }
        cad-menu { grid-area: 2 / 1 / 3 / 3; }
        cad-canvas { flex: 1; }
        step-marks { position: absolute; left: 0; top: 0; z-index: 2; }
        site-badge { position: absolute; right: 0; bottom: 0; z-index: 2; }
      </style>
      <header>
        <button class="app" aria-label="应用程序菜单"><cad-icon name="logo"></cad-icon><cad-icon name="tiny"></cad-icon></button>
        <cad-title-bar></cad-title-bar>
        <cad-menu></cad-menu>
      </header>
      <cad-ribbon></cad-ribbon>
      <cad-file-tabs></cad-file-tabs>
      <cad-canvas></cad-canvas>
      <cad-status-bar></cad-status-bar>
      <step-marks></step-marks>
      <site-badge></site-badge>
    `;
  }
}
customElements.define('cad-app', CadApp);
</script>
</body>
</html>
